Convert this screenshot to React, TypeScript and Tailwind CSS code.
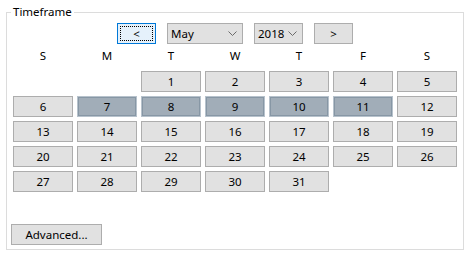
const DAYS = ["S", "M", "T", "W", "T", "F", "S"];
const SELECTED = [7, 8, 9, 10, 11];

// May 2018 begins on a Tuesday
const CELLS: (number | null)[] = [null, null, ...Array.from({ length: 31 }, (_, i) => i + 1)];

function Chevron() {
  return (
    <svg width="9" height="5" viewBox="0 0 9 5" className="shrink-0">
      <path d="M0.5 0.5 L4.5 4.5 L8.5 0.5" fill="none" stroke="#6b6b6b" strokeWidth="1" />
    </svg>
  );
}

export default function App() {
  return (
    <div className="w-[469px] h-[265px] bg-white text-black text-[11.5px] leading-[16px]" style={{ fontFamily: '"Noto Sans", "Liberation Sans", sans-serif' }}>
      <div className="pt-[12px] pl-[6px]">
        <div className="relative w-[458px] h-[238px] border border-[#dcdcdc] flex flex-col pt-[10px] px-[5px] pb-[4px]">
          <span className="absolute -top-[9px] left-[4px] bg-white px-[2px] leading-[16px]">Timeframe</span>

          {/* month navigation */}
          <div className="flex justify-center gap-[11px] h-[21px]">
            <button className="relative w-[39px] h-[21px] border border-[#0078d7] bg-[#e5f1fb] flex items-center justify-center">
              <span className="absolute inset-[2px] border border-dotted border-black" />
              <span>&lt;</span>
            </button>
            <div className="w-[76px] h-[21px] border border-[#adadad] bg-[#e1e1e1] flex items-center justify-between pl-[3px] pr-[5px]">
              <span>May</span>
              <Chevron />
            </div>
            <div className="w-[49px] h-[21px] border border-[#adadad] bg-[#e1e1e1] flex items-center justify-between pl-[3px] pr-[5px]">
              <span>2018</span>
              <Chevron />
            </div>
            <button className="w-[39px] h-[21px] border border-[#adadad] bg-[#e1e1e1] flex items-center justify-center">&gt;</button>
          </div>

          {/* weekday headers */}
          <div className="grid grid-cols-[repeat(7,60px)] gap-x-[4px] ml-[1px] mt-[4px] mb-[7px]">
            {DAYS.map((d, i) => (
              <div key={i} className="text-center h-[16px]">{d}</div>
            ))}
          </div>

          {/* day grid */}
          <div className="grid grid-cols-[repeat(7,60px)] auto-rows-[21px] gap-[4px] ml-[1px]">
            {CELLS.map((n, i) =>
              n === null ? (
                <div key={i} />
              ) : SELECTED.includes(n) ? (
                <div key={i} className="border border-[#b7c2cc] bg-[#a1adb8] shadow-[inset_0_0_0_1px_#8797a5] flex items-center justify-center">{n}</div>
              ) : (
                <div key={i} className="border border-[#adadad] bg-[#e1e1e1] flex items-center justify-center">{n}</div>
              )
            )}
          </div>

          <div className="mt-auto">
            <button className="w-[91px] h-[21px] border border-[#adadad] bg-[#e1e1e1] flex items-center justify-center -ml-[1px]">Advanced...</button>
          </div>
        </div>
      </div>
    </div>
  );
}
